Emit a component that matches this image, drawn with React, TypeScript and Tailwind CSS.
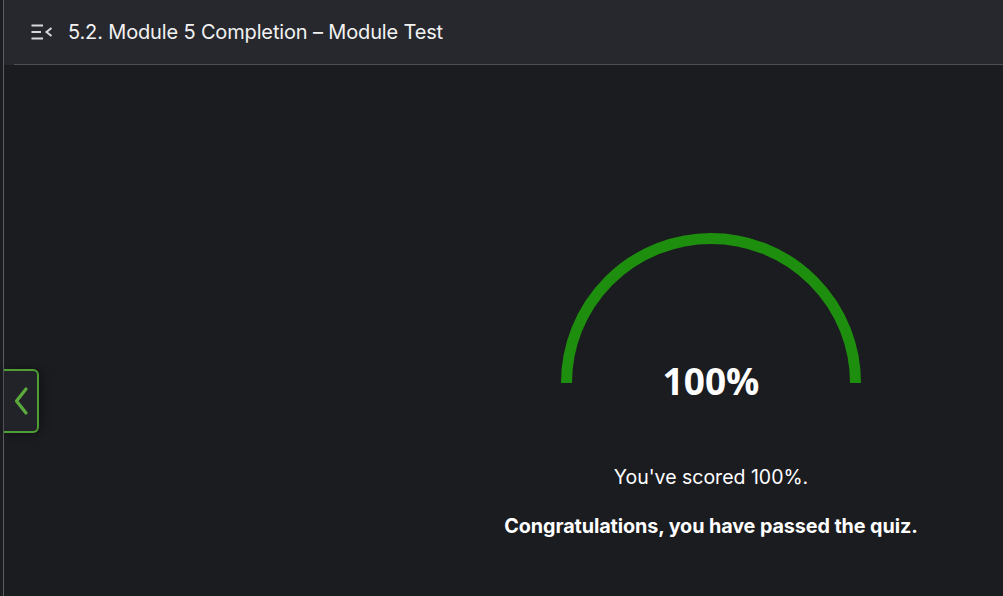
import React from "react";

export default function App() {
  return (
    <div className="w-[1003px] h-[596px] flex bg-[#1b1c20] overflow-hidden" style={{ fontFamily: "Inter, 'Noto Sans', sans-serif" }}>
      <div className="w-[3px] shrink-0 bg-[#1c1d21]" />
      <div className="w-[1px] shrink-0 bg-[#5c5d61]" />
      <div className="flex-1 flex flex-col relative">
        <header className="h-[65px] bg-[#27282d] flex flex-col">
          <div className="flex-1 flex items-center pl-[26px]">
            <svg width="24" height="24" viewBox="0 0 24 24" className="text-[#d9d9db]">
              <path d="M1.5 5.5H13M1.5 12H11M1.5 18.5H13" stroke="currentColor" strokeWidth="2.2" fill="none" />
              <path d="M21.5 8L16.5 12L21.5 16" stroke="currentColor" strokeWidth="2" fill="none" />
            </svg>
            <span className="ml-[14px] text-[20px] text-[#f2f2f3] tracking-[-0.15px]">5.2. Module 5 Completion – Module Test</span>
          </div>
          <div className="h-[1px] ml-[10px] bg-[#4d4e53]" />
        </header>
        <main className="flex-1 flex flex-col items-center pl-[415px] pt-[168px]">
          <svg width="300" height="150" viewBox="0 0 300 150">
            <path d="M5.5 150 A144.5 144.5 0 0 1 294.5 150" stroke="#1e8e0e" strokeWidth="11" fill="none" />
          </svg>
          <div className="mt-[-24px] h-[44px] leading-[44px] text-[37px] font-bold text-white" style={{ fontFamily: "'Open Sans', sans-serif" }}>100%</div>
          <p className="mt-[62px] text-[19.5px] leading-[24px] text-white">You've scored 100%.</p>
          <p className="mt-[25px] text-[19.8px] leading-[24px] font-bold text-white tracking-[-0.1px]">Congratulations, you have passed the quiz.</p>
        </main>
        <div className="absolute left-0 top-[369px] w-[35px] h-[64px] border-2 border-l-0 border-[#4f9e33] rounded-r-[6px] bg-[#222328] shadow-[2px_0_8px_rgba(0,0,0,0.4)] flex items-center justify-center">
          <svg width="18" height="30" viewBox="0 0 18 30">
            <path d="M14 3L4.5 15L14 27" stroke="#5aaa3c" strokeWidth="3.2" fill="none" strokeLinecap="round" strokeLinejoin="round" />
          </svg>
        </div>
      </div>
    </div>
  );
}
